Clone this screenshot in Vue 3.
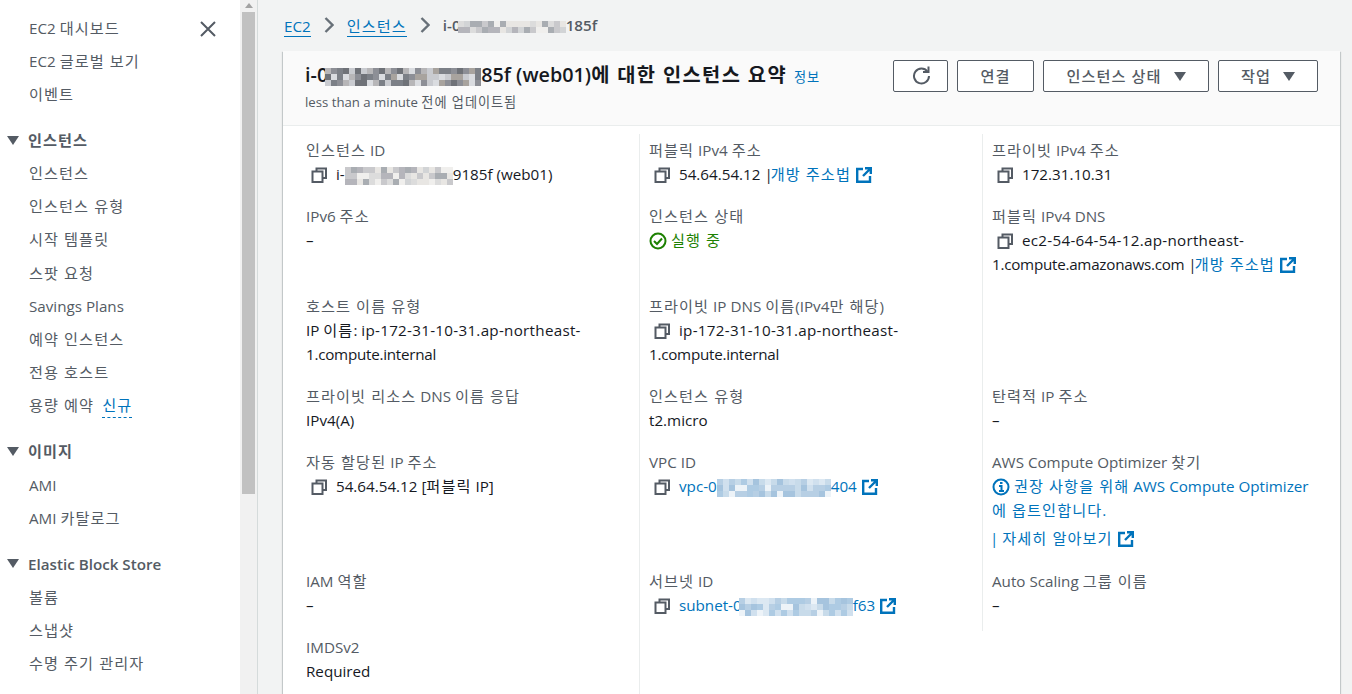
<template>
  <div class="page">
    <svg class="defs" width="0" height="0">
      <symbol id="copy" viewBox="0 0 16 16">
        <path d="M5.500 4V1.500h9.500v9.500H12" fill="none" stroke="#545b64" stroke-width="2" />
        <rect x="1.500" y="4.500" width="10" height="10.500" fill="none" stroke="#545b64" stroke-width="2" />
      </symbol>
      <symbol id="ext" viewBox="0 0 16 16">
        <path d="M7 2H1.200v12.800H14V9M9 1.200h5.800V7M14.500 1.500L7 9" fill="none" stroke="#0073bb" stroke-width="2.400" />
      </symbol>
    </svg>

    <!-- 사이드 메뉴 -->
    <aside class="side">
      <nav class="nav">
        <div class="close">
          <svg width="16" height="16" viewBox="0 0 16 16"><path d="M1 1l14 14M15 1L1 15" stroke="#545b64" stroke-width="2" /></svg>
        </div>
        <section v-for="group in nav" :key="group.title" class="group">
          <h3 v-if="group.title" class="group-title"><i class="tri"></i><T :s="group.title" /></h3>
          <a v-for="item in group.items" :key="item" class="nav-item">
            <T :s="item" /><span v-if="item === '용량 예약'" class="new"><T s="신규" /></span>
          </a>
        </section>
      </nav>
      <div class="scrollbar">
        <i class="scroll-up"></i>
        <div class="scroll-thumb"></div>
      </div>
    </aside>

    <main class="main">
      <div class="crumbs">
        <a class="crumb">EC2</a>
        <svg class="chev" viewBox="0 0 10 16"><path d="M1.500 1L8.500 8l-7 7" fill="none" stroke="#687078" stroke-width="2.400" /></svg>
        <a class="crumb"><T s="인스턴스" /></a>
        <svg class="chev" viewBox="0 0 10 16"><path d="M1.500 1L8.500 8l-7 7" fill="none" stroke="#687078" stroke-width="2.400" /></svg>
        <span class="crumb-now">i-0<span class="mosaic" :style="blur.crumb.style"><i v-for="(c, i) in blur.crumb.cells" :key="i" :style="{ background: c }"></i></span>185f</span>
      </div>

      <div class="card">
        <header class="card-head">
          <div class="head-text">
            <h1 class="title">i-0<span class="mosaic" :style="blur.title.style"><i v-for="(c, i) in blur.title.cells" :key="i" :style="{ background: c }"></i></span>85f (web01)<T s="에 대한 인스턴스 요약" /><a class="info"><T s="정보" /></a></h1>
            <p class="updated"><T s="less than a minute 전에 업데이트됨" /></p>
          </div>
          <div class="actions">
            <button class="btn btn-icon">
              <svg width="20" height="20" viewBox="0 0 20 20"><path d="M16.500 6.500A7.500 7.500 0 1 0 18 11" fill="none" stroke="#545b64" stroke-width="2" /><path d="M17.500 1.500V7h-5.500" fill="none" stroke="#545b64" stroke-width="2" /></svg>
            </button>
            <button class="btn btn-connect"><T s="연결" /></button>
            <button class="btn btn-state"><T s="인스턴스 상태" /><i class="tri tri-btn"></i></button>
            <button class="btn btn-work"><T s="작업" /><i class="tri tri-btn"></i></button>
          </div>
        </header>

        <div class="grid">
          <div class="cell">
            <div class="label"><T s="인스턴스 ID" /></div>
            <div class="value"><svg class="copy"><use href="#copy" /></svg>i-<span class="mosaic mosaic-flush" :style="blur.id.style"><i v-for="(c, i) in blur.id.cells" :key="i" :style="{ background: c }"></i></span>9185f (web01)</div>
          </div>
          <div class="cell">
            <div class="label"><T s="퍼블릭 IPv4 주소" /></div>
            <div class="value"><svg class="copy"><use href="#copy" /></svg>54.64.54.12 |<a class="link after-bar"><T s="개방 주소법" /><svg class="ext"><use href="#ext" /></svg></a></div>
          </div>
          <div class="cell">
            <div class="label"><T s="프라이빗 IPv4 주소" /></div>
            <div class="value"><svg class="copy"><use href="#copy" /></svg>172.31.10.31</div>
          </div>

          <div class="cell">
            <div class="label"><T s="IPv6 주소" /></div>
            <div class="value">–</div>
          </div>
          <div class="cell">
            <div class="label"><T s="인스턴스 상태" /></div>
            <div class="value running">
              <svg class="status" viewBox="0 0 18 18"><circle cx="9" cy="9" r="7.500" fill="none" stroke="#1d8102" stroke-width="2" /><path d="M5 9l3 3 5-5.500" fill="none" stroke="#1d8102" stroke-width="2" /></svg><T s="실행 중" />
            </div>
          </div>
          <div class="cell">
            <div class="label"><T s="퍼블릭 IPv4 DNS" /></div>
            <div class="value"><svg class="copy"><use href="#copy" /></svg><span class="wide">ec2-54-64-54-12.ap-northeast-</span><span class="narrow">1.compute.amazonaws.com</span> |<a class="link after-bar"><T s="개방 주소법" /><svg class="ext"><use href="#ext" /></svg></a></div>
          </div>

          <div class="cell">
            <div class="label"><T s="호스트 이름 유형" /></div>
            <div class="value"><T s="IP 이름: " /><span class="wide">ip-172-31-10-31.ap-northeast-</span><span class="narrow">1.compute.internal</span></div>
          </div>
          <div class="cell">
            <div class="label"><T s="프라이빗 IP DNS 이름(IPv4만 해당)" /></div>
            <div class="value"><svg class="copy"><use href="#copy" /></svg><span class="wide">ip-172-31-10-31.ap-northeast-</span><span class="narrow">1.compute.internal</span></div>
          </div>
          <div class="cell"></div>

          <div class="cell">
            <div class="label"><T s="프라이빗 리소스 DNS 이름 응답" /></div>
            <div class="value">IPv4(A)</div>
          </div>
          <div class="cell">
            <div class="label"><T s="인스턴스 유형" /></div>
            <div class="value">t2.micro</div>
          </div>
          <div class="cell">
            <div class="label"><T s="탄력적 IP 주소" /></div>
            <div class="value">–</div>
          </div>

          <div class="cell">
            <div class="label"><T s="자동 할당된 IP 주소" /></div>
            <div class="value"><svg class="copy"><use href="#copy" /></svg><T s="54.64.54.12 [퍼블릭 IP]" /></div>
          </div>
          <div class="cell">
            <div class="label">VPC ID</div>
            <div class="value"><svg class="copy"><use href="#copy" /></svg><a class="link">vpc-0<span class="mosaic mosaic-flush" :style="blur.vpc.style"><i v-for="(c, i) in blur.vpc.cells" :key="i" :style="{ background: c }"></i></span>404<svg class="ext"><use href="#ext" /></svg></a></div>
          </div>
          <div class="cell">
            <div class="label"><T s="AWS Compute Optimizer 찾기" /></div>
            <div class="value link">
              <svg class="status" viewBox="0 0 18 18"><circle cx="9" cy="9" r="7.500" fill="none" stroke="#0073bb" stroke-width="2" /><path d="M7 8h2.500v5M7 13h5M8 5h2.500" fill="none" stroke="#0073bb" stroke-width="2" /></svg><T s="권장 사항을 위해 AWS Compute Optimizer 에 옵트인합니다." />
            </div>
            <div class="value more"><span class="bar">|</span> <a class="link"><T s="자세히 알아보기" /><svg class="ext"><use href="#ext" /></svg></a></div>
          </div>

          <div class="cell">
            <div class="label"><T s="IAM 역할" /></div>
            <div class="value">–</div>
          </div>
          <div class="cell">
            <div class="label"><T s="서브넷 ID" /></div>
            <div class="value"><svg class="copy"><use href="#copy" /></svg><a class="link">subnet-0<span class="mosaic" :style="blur.subnet.style"><i v-for="(c, i) in blur.subnet.cells" :key="i" :style="{ background: c }"></i></span>f63<svg class="ext"><use href="#ext" /></svg></a></div>
          </div>
          <div class="cell">
            <div class="label"><T s="Auto Scaling 그룹 이름" /></div>
            <div class="value">–</div>
          </div>

          <div class="cell">
            <div class="label">IMDSv2</div>
            <div class="value">Required</div>
          </div>
          <div class="cell"></div>
        </div>
      </div>
    </main>
  </div>
</template>

<script setup>
import { h } from "vue";

// 한글 글자 폭이 레퍼런스보다 좁아서 한글 구간만 따로 감싼다
const T = (props) =>
  props.s
    .split(/([가-힣]+(?: [가-힣]+)*)/)
    .filter(Boolean)
    .map((run) => (/[가-힣]/.test(run) ? h("span", { class: "ko" }, run) : run));
T.props = ["s"];

const nav = [
  { title: "", items: ["EC2 대시보드", "EC2 글로벌 보기", "이벤트"] },
  {
    title: "인스턴스",
    items: ["인스턴스", "인스턴스 유형", "시작 템플릿", "스팟 요청", "Savings Plans", "예약 인스턴스", "전용 호스트", "용량 예약"],
  },
  { title: "이미지", items: ["AMI", "AMI 카탈로그"] },
  { title: "Elastic Block Store", items: ["볼륨", "스냅샷", "수명 주기 관리자"] },
];

// 가려진 ID 부분: 픽셀 모자이크
const CELL = 6;
function mosaic(w, h, palette, seed) {
  const count = Math.ceil(w / CELL) * Math.floor(h / CELL);
  const cells = [];
  let s = seed;
  for (let i = 0; i < count; i++) {
    s = (s * 9301 + 49297) % 233280;
    cells.push(palette[s % palette.length]);
  }
  return { cells, style: { width: `${w}px`, height: `${h}px` } };
}

const gray = ["#b5b5bb", "#c9c9cc", "#dcdcdc", "#a9adb2", "#e8e6e3", "#d2d4d6", "#f0efed"];
const dark = ["#8d8f96", "#b7b6b8", "#6f7278", "#c9cbd0", "#a8a39e", "#dadce0", "#7c8087"];
const blue = ["#c8dbea", "#aecbe3", "#dce8f2", "#b7cfe4", "#edf3f8", "#a6c4de", "#d0e0ee"];

const blur = {
  crumb: mosaic(108, 12, gray, 11),
  title: mosaic(156, 18, dark, 23),
  id: mosaic(108, 18, gray, 37),
  vpc: mosaic(114, 18, blue, 51),
  subnet: mosaic(114, 18, blue, 73),
};
</script>

<style scoped>
.page {
  display: flex;
  height: 694px;
  overflow: hidden;
  background: #f2f3f3;
  color: #16191f;
  font-family: "Open Sans", "Noto Sans CJK KR", sans-serif;
  font-size: 15.2px;
  line-height: 24px;
}
.defs {
  position: absolute;
}

/* 사이드 메뉴 */
.side {
  display: flex;
  flex: none;
  width: 258px;
  background: #fff;
  border-right: 1px solid #d5dbdb;
  box-sizing: border-box;
}
.nav {
  position: relative;
  flex: none;
  width: 240px;
  padding-top: 11.500px;
  box-sizing: border-box;
  color: #545b64;
}
.close {
  position: absolute;
  top: 21px;
  left: 200px;
  line-height: 0;
}
.group {
  margin-bottom: 13px;
}
.group-title {
  display: flex;
  align-items: center;
  box-sizing: border-box;
  height: 33.500px;
  margin: 0;
  padding-bottom: 1px;
  font-size: 15.2px;
  font-weight: 600;
}
.nav-item {
  display: block;
  height: 33.100px;
  line-height: 33.100px;
  padding-left: 29px;
}
.tri {
  display: inline-block;
  width: 0;
  height: 0;
  margin: 0 9px 0 7px;
  border-left: 6px solid transparent;
  border-right: 6px solid transparent;
  border-top: 9px solid #545b64;
}
.new {
  margin-left: 8px;
  color: #0073bb;
  border-bottom: 1px dashed #0073bb;
  padding-bottom: 2px;
}
.scrollbar {
  flex: 1;
  background: #f1f1f1;
  padding-top: 3px;
  box-sizing: border-box;
}
.scroll-up {
  display: block;
  width: 0;
  margin: 0 auto 4px;
  border-left: 4px solid transparent;
  border-right: 4px solid transparent;
  border-bottom: 5px solid #a3a3a3;
}
.scroll-thumb {
  width: 13px;
  height: 482px;
  margin: 0 auto;
  background: #c1c1c1;
}

/* 본문 */
.main {
  flex: 1;
  min-width: 0;
  padding: 13px 12px 0 25px;
}
.crumbs {
  display: flex;
  align-items: center;
  height: 24px;
  margin-bottom: 14px;
  margin-left: 1px;
}
.crumb {
  color: #0073bb;
  border-bottom: 1px solid #0073bb;
  line-height: 20px;
  margin-top: 3px;
}
.chev {
  width: 10px;
  height: 16px;
  margin: 0 13px;
}
.crumb-now {
  color: #545b64;
  font-weight: 600;
}
.mosaic {
  display: inline-grid;
  grid-template-columns: repeat(auto-fill, 6px);
  grid-auto-rows: 6px;
  margin-left: -3px;
  vertical-align: middle;
  overflow: hidden;
}
.mosaic-flush {
  margin-left: 0;
}
.card {
  background: #fff;
  box-shadow: 0 1px 1px 0 rgba(0, 28, 36, 0.3), 1px 1px 1px 0 rgba(0, 28, 36, 0.15), -1px 1px 1px 0 rgba(0, 28, 36, 0.15);
}
.card-head {
  display: flex;
  justify-content: space-between;
  box-sizing: border-box;
  height: 75px;
  padding: 10px 22px 0 22px;
  background: #fafafa;
  border-bottom: 1px solid #eaeded;
}
.title {
  margin: 0;
  font-size: 19.8px;
  line-height: 28px;
  font-weight: 600;
}
.info {
  margin-left: 7px;
  font-size: 13.200px;
  font-weight: 400;
  color: #0073bb;
}
.updated {
  margin: 1px 0 0;
  font-size: 13.200px;
  line-height: 20px;
  color: #545b64;
}
.actions {
  display: flex;
  gap: 9px;
  margin-top: -1px;
}
.btn {
  display: flex;
  align-items: center;
  justify-content: center;
  box-sizing: border-box;
  height: 32px;
  padding: 0 0 2px;
  background: #fff;
  border: 1px solid #545b64;
  border-radius: 2px;
  color: #545b64;
  font: 500 15.2px "Open Sans", "Noto Sans CJK KR", sans-serif;
}
.btn-icon {
  width: 55px;
}
.btn-connect {
  width: 77px;
}
.btn-state {
  width: 166px;
}
.btn-work {
  width: 100px;
}
.tri-btn {
  margin: 3px 0 0 12px;
}

.grid {
  display: grid;
  grid-template-columns: 356px 343px 1fr;
  padding-top: 8px;
}
.cell {
  padding: 0 20px 19px 9px;
  min-width: 0;
  border-left: 1px solid #eaeded;
}
.cell:nth-child(3n + 1) {
  padding-left: 23px;
  border-left: 0;
}
.label {
  color: #545b64;
  line-height: 22px;
  margin-top: 5px;
  margin-bottom: -4px;
}
.value {
  line-height: 24px;
  margin-top: 5px;
  margin-bottom: -5px;
}
.copy {
  width: 16px;
  height: 16px;
  margin: 0 9px 0 5px;
  vertical-align: -3px;
}
.ext {
  width: 16px;
  height: 16px;
  margin-left: 5px;
  vertical-align: -3px;
}
.status {
  width: 18px;
  height: 18px;
  margin-right: 4px;
  vertical-align: -4px;
}
.link {
  color: #0073bb;
}
.after-bar {
  margin-left: -2px;
}
.running {
  color: #1d8102;
}
.more {
  margin-top: 9px;
  margin-bottom: -4px;
}
.bar {
  margin-left: -2px;
  color: #0073bb;
}
.wide {
  letter-spacing: 0.28px;
}
.narrow {
  letter-spacing: -0.25px;
}
</style>

<style>
html,
body {
  margin: 0;
  overflow: hidden;
}
.ko {
  letter-spacing: 0.07em;
}
</style>
